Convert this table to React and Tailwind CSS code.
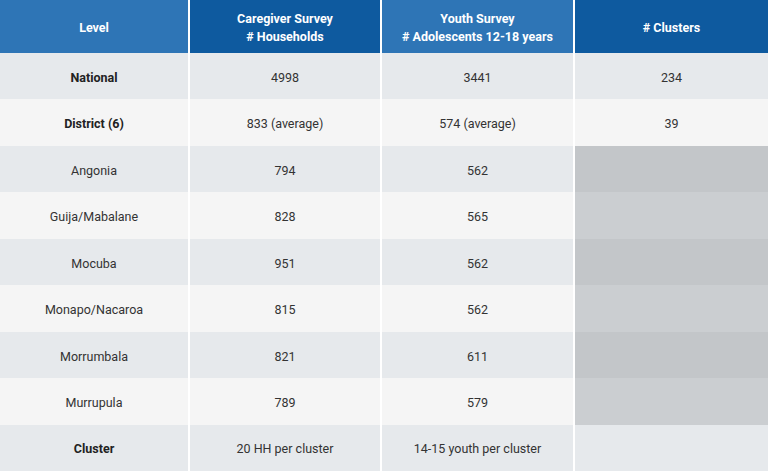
import React from 'react';

const ROWS = [
  { level: 'National', cg: '4998', ys: '3441', cl: '234', bold: true },
  { level: 'District (6)', cg: '833 (average)', ys: '574 (average)', cl: '39', bold: true },
  { level: 'Angonia', cg: '794', ys: '562', shade: true },
  { level: 'Guija/Mabalane', cg: '828', ys: '565', shade: true },
  { level: 'Mocuba', cg: '951', ys: '562', shade: true },
  { level: 'Monapo/Nacaroa', cg: '815', ys: '562', shade: true },
  { level: 'Morrumbala', cg: '821', ys: '611', shade: true },
  { level: 'Murrupula', cg: '789', ys: '579', shade: true },
  { level: 'Cluster', cg: '20 HH per cluster', ys: '14-15 youth per cluster', cl: '', bold: true },
];

export default function App() {
  return (
    <div
      className="w-[768px] h-[471px] bg-white grid grid-cols-[188px_190px_191px_1fr] grid-rows-[53px_repeat(9,1fr)] gap-x-[2px] text-[12.5px] text-[#333]"
      style={{ fontFamily: 'Roboto, "Liberation Sans", sans-serif' }}
    >
      {/* Header */}
      <div className="bg-[#2e75b6] text-white font-bold flex items-center justify-center text-center leading-[18px] pt-[2px]">Level</div>
      <div className="bg-[#0e5a9f] text-white font-bold flex items-center justify-center text-center leading-[18px] pt-[2px]">
        Caregiver Survey<br /># Households
      </div>
      <div className="bg-[#2e75b6] text-white font-bold flex items-center justify-center text-center leading-[18px] pt-[2px]">
        Youth Survey<br /># Adolescents 12-18 years
      </div>
      <div className="bg-[#0e5a9f] text-white font-bold flex items-center justify-center text-center leading-[18px] pt-[2px]"># Clusters</div>

      {ROWS.map((r, i) => {
        const odd = i % 2 === 0;
        const bg = odd ? 'bg-[#e6e9ec]' : 'bg-[#f5f5f5]';
        const grey = odd ? 'bg-[#c3c6c9]' : 'bg-[#cbced1]';
        return (
          <React.Fragment key={r.level}>
            <div className={`${bg} flex items-center justify-center pt-[4px] ${r.bold ? 'font-bold text-[#222]' : ''}`}>{r.level}</div>
            <div className={`${bg} flex items-center justify-center pt-[4px]`}>{r.cg}</div>
            <div className={`${bg} flex items-center justify-center pt-[4px]`}>{r.ys}</div>
            <div className={`${r.shade ? grey : bg} flex items-center justify-center pt-[4px]`}>{r.cl}</div>
          </React.Fragment>
        );
      })}
    </div>
  );
}
